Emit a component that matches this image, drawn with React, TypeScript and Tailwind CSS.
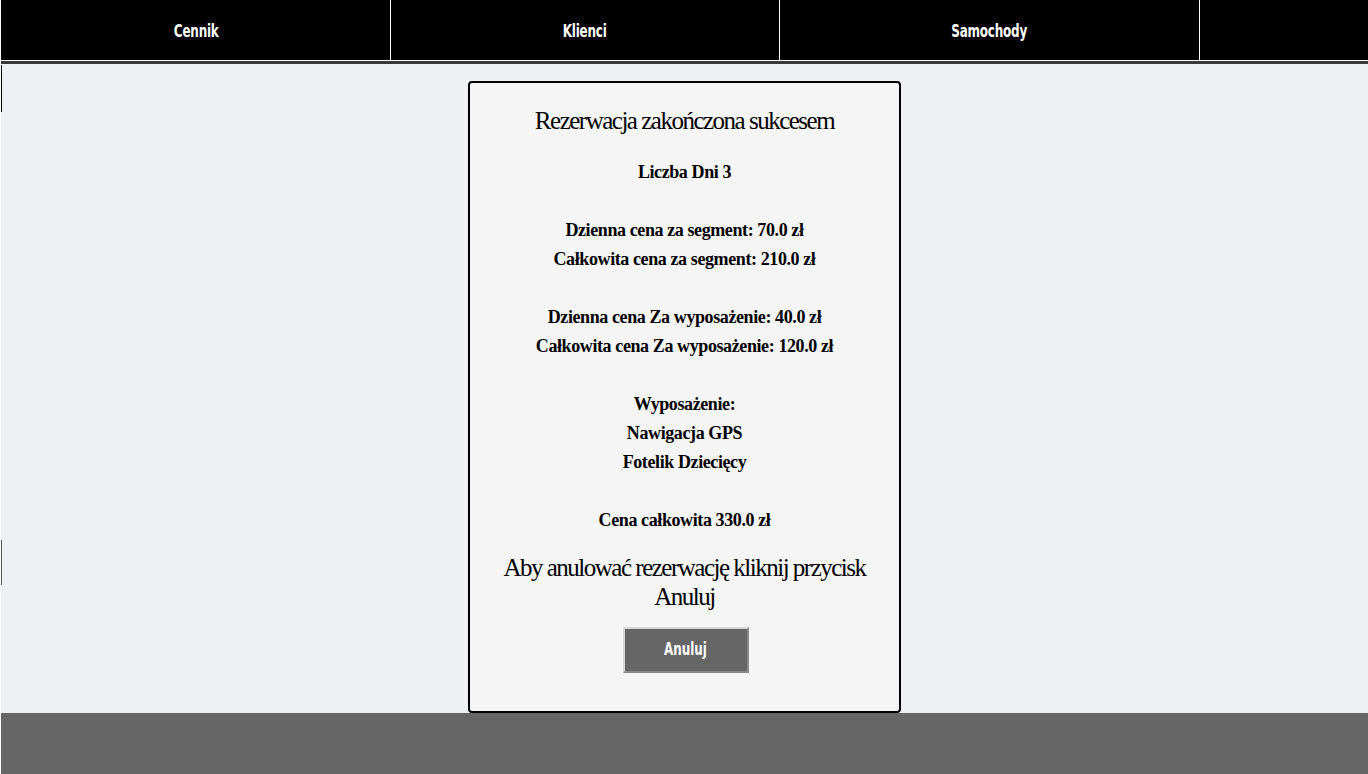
import React from "react";

const serif = "font-['Liberation_Serif','Times_New_Roman',serif]";
const narrow = "font-['DejaVu_Sans_Condensed','Liberation_Sans',sans-serif]";

const navItems = [
  { label: "Cennik", w: "w-[387px]" },
  { label: "Klienci", w: "w-[389px]" },
  { label: "Samochody", w: "w-[420px]" },
  { label: "", w: "flex-1" },
];

export default function App() {
  return (
    <div className="min-h-[774px] flex flex-col bg-white pl-[1px]">
      {/* nav */}
      <div className="flex h-[61px] bg-black border-b border-white">
        {navItems.map((item, i) => (
          <div
            key={i}
            className={`${item.w} flex items-center justify-center pt-[1px] border-l border-white first:border-l-0 first:ml-[2px]`}
          >
            <span
              className={`${narrow} inline-block scale-x-[0.74] text-white font-bold text-[18px] tracking-[-0.3px]`}
            >
              {item.label}
            </span>
          </div>
        ))}
      </div>
      <div className="h-[3px] bg-[#3a3a3a]" />

      {/* main */}
      <div className="relative flex-1 bg-[#eef0f3] flex justify-center pt-[17px]">
        <div className="absolute left-0 top-[1px] h-[47px] w-[1px] bg-black" />
        <div className="absolute left-0 top-[476px] h-[45px] w-[1px] bg-[#555]" />
        <div
          className={`${serif} w-[433px] h-[632px] bg-[#f5f5f5] border-2 border-black rounded-[4px] text-black text-center flex flex-col items-center`}
        >
          <h1 className="mt-[20px] text-[25px] leading-[36px] tracking-[-1.5px]">
            Rezerwacja zakończona sukcesem
          </h1>
          <div className="mt-[19px] font-bold text-[18px] leading-[29px] tracking-[-0.4px]">
            <p>Liczba Dni 3</p>
            <p>&nbsp;</p>
            <p>Dzienna cena za segment: 70.0 zł</p>
            <p>Całkowita cena za segment: 210.0 zł</p>
            <p>&nbsp;</p>
            <p>Dzienna cena Za wyposażenie: 40.0 zł</p>
            <p>Całkowita cena Za wyposażenie: 120.0 zł</p>
            <p>&nbsp;</p>
            <p>Wyposażenie:</p>
            <p>Nawigacja GPS</p>
            <p>Fotelik Dziecięcy</p>
            <p>&nbsp;</p>
            <p>Cena całkowita 330.0 zł</p>
          </div>
          <p className="mt-[18px] text-[25px] leading-[29px] tracking-[-1.5px] whitespace-nowrap">
            Aby anulować rezerwację kliknij przycisk
            <br />
            Anuluj
          </p>
          <button
            className="mt-[16px] ml-[2px] w-[126px] h-[46px] bg-[#666] border-2 border-t-[#d8d8d8] border-l-[#d8d8d8] border-b-[#8a8a8a] border-r-[#8a8a8a]"
          >
            <span
              className={`${narrow} inline-block scale-x-[0.78] text-white font-bold text-[17px]`}
            >
              Anuluj
            </span>
          </button>
        </div>
      </div>

      {/* footer */}
      <div className="h-[61px] bg-[#666]" />
    </div>
  );
}
